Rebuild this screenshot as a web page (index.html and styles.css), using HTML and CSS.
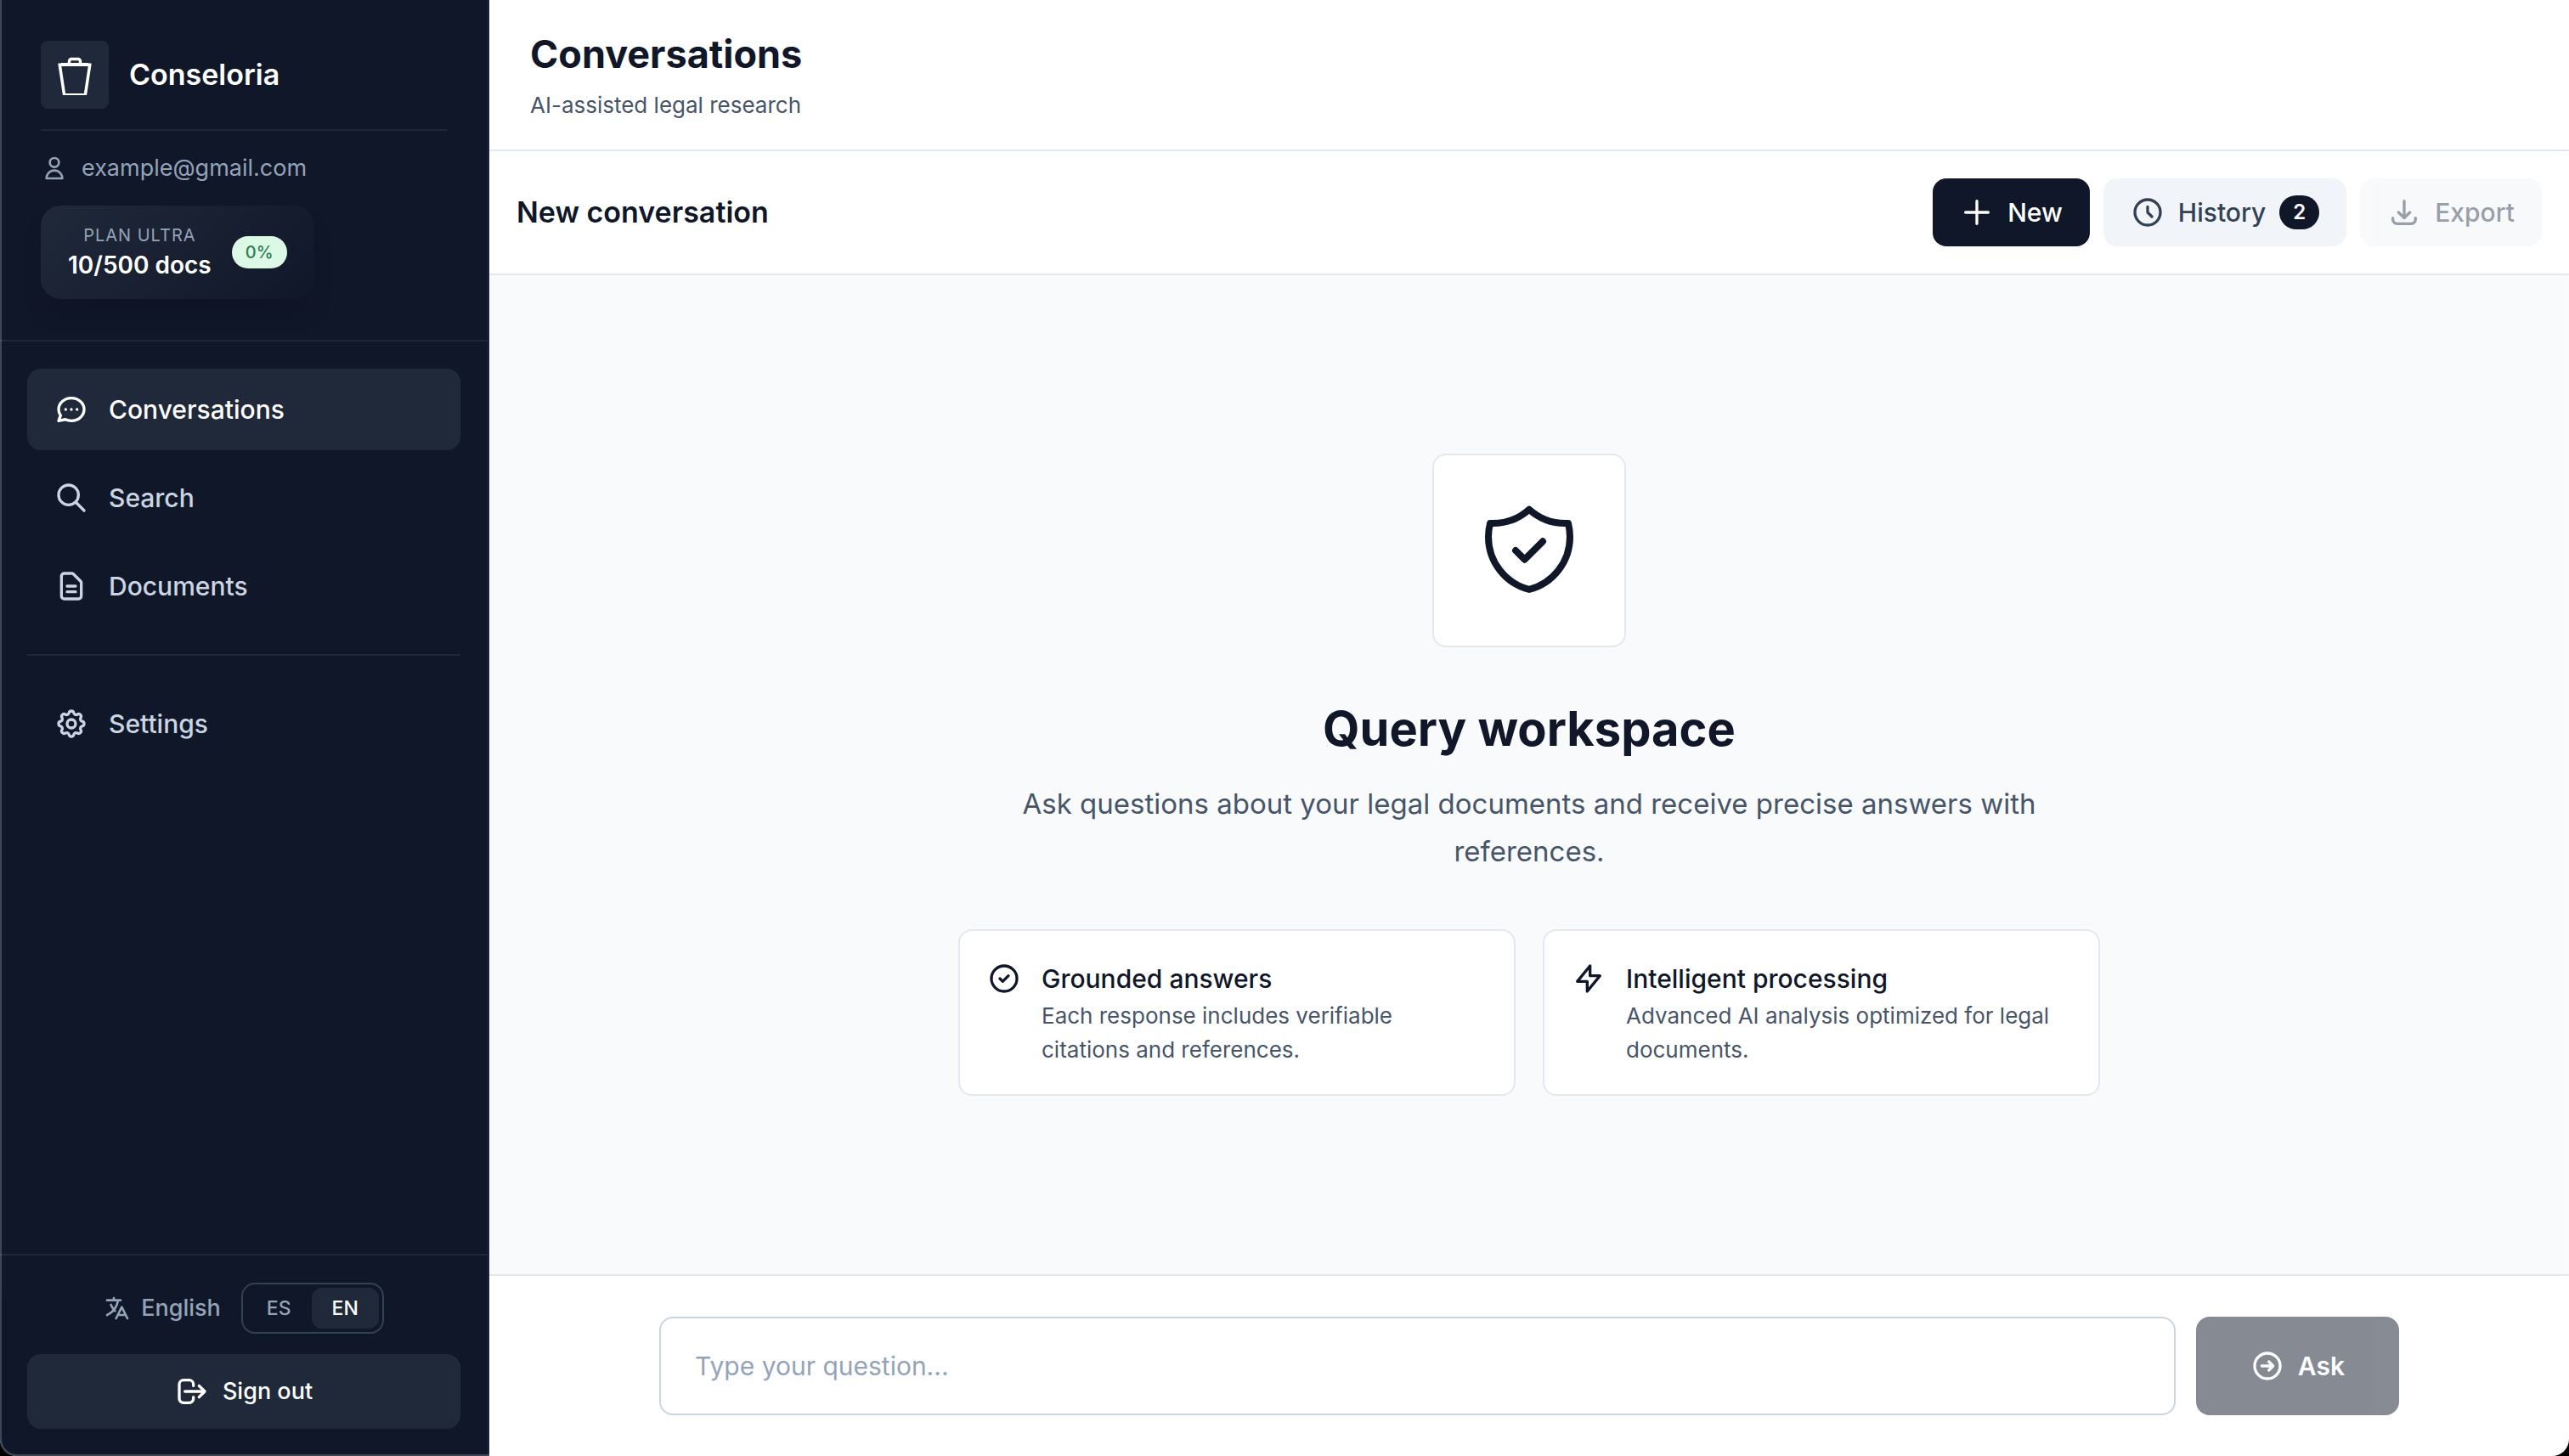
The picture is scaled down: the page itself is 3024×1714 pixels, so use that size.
FILE: index.html
```
<!DOCTYPE html>
<html lang="en">

<head>
    <meta charset="utf-8">
    <title>Conseloria</title>
    <link rel="stylesheet" href="styles.css">
</head>

<body>
    <div class="app">
        <aside class="sidebar">
            <div class="sidebar-header">
                <div class="brand">
                    <div class="brand-logo">
                        <svg width="48" height="48" viewBox="0 0 48 48" fill="none" stroke="currentColor">
                            <path d="M6 10.500L11.500 47M42 10.500L36.500 47" stroke-width="3.500" />
                            <path d="M8 12h32" stroke-width="4" />
                            <path d="M10 47h28" stroke-width="2" />
                            <path d="M17.500 11V8a2.500 2.500 0 0 1 2.500-2.500h8a2.500 2.500 0 0 1 2.500 2.500v3" stroke-width="3.500" />
                        </svg>
                    </div>
                    <span class="brand-name">Conseloria</span>
                </div>
                <div class="user">
                    <svg class="icon icon-sm" viewBox="0 0 24 24"><path d="M16 7a4 4 0 11-8 0 4 4 0 018 0zM12 14a7 7 0 00-7 7h14a7 7 0 00-7-7z" /></svg>
                    <span>example@gmail.com</span>
                </div>
                <div class="plan">
                    <div class="plan-info">
                        <span class="plan-name">Plan Ultra</span>
                        <span class="plan-docs">10/500 docs</span>
                    </div>
                    <span class="plan-badge">0%</span>
                </div>
            </div>

            <nav class="nav">
                <a class="nav-item active" href="#">
                    <svg class="icon" viewBox="0 0 24 24"><path d="M8 12h.01M12 12h.01M16 12h.01M21 12c0 4.418-4.030 8-9 8a9.863 9.863 0 01-4.255-.949L3 20l1.395-3.720C3.512 15.042 3 13.574 3 12c0-4.418 4.030-8 9-8s9 3.582 9 8z" /></svg>
                    Conversations
                </a>
                <a class="nav-item" href="#">
                    <svg class="icon" viewBox="0 0 24 24"><path d="M21 21l-6-6m2-5a7 7 0 11-14 0 7 7 0 0114 0z" /></svg>
                    Search
                </a>
                <a class="nav-item" href="#">
                    <svg class="icon" viewBox="0 0 24 24"><path d="M9 12h6m-6 4h6m2 5H7a2 2 0 01-2-2V5a2 2 0 012-2h5.586a1 1 0 01.707.293l5.414 5.414a1 1 0 01.293.707V19a2 2 0 01-2 2z" /></svg>
                    Documents
                </a>
                <hr class="nav-divider">
                <a class="nav-item" href="#">
                    <svg class="icon" viewBox="0 0 24 24">
                        <path d="M10.325 4.317c.426-1.756 2.924-1.756 3.350 0a1.724 1.724 0 002.573 1.066c1.543-.940 3.310.826 2.370 2.370a1.724 1.724 0 001.065 2.572c1.756.426 1.756 2.924 0 3.350a1.724 1.724 0 00-1.066 2.573c.940 1.543-.826 3.310-2.370 2.370a1.724 1.724 0 00-2.572 1.065c-.426 1.756-2.924 1.756-3.350 0a1.724 1.724 0 00-2.573-1.066c-1.543.940-3.310-.826-2.370-2.370a1.724 1.724 0 00-1.065-2.572c-1.756-.426-1.756-2.924 0-3.350a1.724 1.724 0 001.066-2.573c-.940-1.543.826-3.310 2.370-2.370.996.608 2.296.070 2.572-1.065z" />
                        <path d="M15 12a3 3 0 11-6 0 3 3 0 016 0z" />
                    </svg>
                    Settings
                </a>
            </nav>

            <div class="sidebar-footer">
                <div class="language">
                    <span class="language-label">
                        <svg class="icon icon-sm" viewBox="0 0 24 24"><path d="M3 5h12M9 3v2m1.048 9.500A18.022 18.022 0 016.412 9m6.088 9h7M11 21l5-10 5 10M12.751 5C11.783 10.770 8.070 15.610 3 18.129" /></svg>
                        English
                    </span>
                    <div class="language-switch">
                        <button type="button">ES</button>
                        <button type="button" class="selected">EN</button>
                    </div>
                </div>
                <button type="button" class="sign-out">
                    <svg class="icon" viewBox="0 0 24 24"><path d="M17 16l4-4m0 0l-4-4m4 4H7m6 4v1a3 3 0 01-3 3H6a3 3 0 01-3-3V7a3 3 0 013-3h4a3 3 0 013 3v1" /></svg>
                    Sign out
                </button>
            </div>
        </aside>

        <main class="main">
            <header class="page-header">
                <h1>Conversations</h1>
                <p>AI-assisted legal research</p>
            </header>

            <div class="toolbar">
                <h2>New conversation</h2>
                <div class="toolbar-actions">
                    <button type="button" class="btn btn-primary">
                        <svg class="icon" viewBox="0 0 24 24"><path d="M12 4v16m8-8H4" /></svg>
                        New
                    </button>
                    <button type="button" class="btn">
                        <svg class="icon" viewBox="0 0 24 24"><path d="M12 8v4l3 3m6-3a9 9 0 11-18 0 9 9 0 0118 0z" /></svg>
                        History
                        <span class="count">2</span>
                    </button>
                    <button type="button" class="btn" disabled>
                        <svg class="icon" viewBox="0 0 24 24"><path d="M4 16v1a3 3 0 003 3h10a3 3 0 003-3v-1m-4-4l-4 4m0 0l-4-4m4 4V4" /></svg>
                        Export
                    </button>
                </div>
            </div>

            <section class="workspace">
                <div class="workspace-icon">
                    <svg class="icon icon-xl" viewBox="0 0 24 24"><path d="M9 12l2 2 4-4m5.618-4.016A11.955 11.955 0 0112 2.944a11.955 11.955 0 01-8.618 3.040A12.020 12.020 0 003 9c0 5.591 3.824 10.290 9 11.622 5.176-1.332 9-6.030 9-11.622 0-1.042-.133-2.052-.382-3.016z" /></svg>
                </div>
                <h2>Query workspace</h2>
                <p class="workspace-text">Ask questions about your legal documents and receive precise answers with references.</p>
                <div class="features">
                    <div class="feature">
                        <svg class="icon" viewBox="0 0 24 24"><path d="M9 12l2 2 4-4m6 2a9 9 0 11-18 0 9 9 0 0118 0z" /></svg>
                        <div>
                            <h3>Grounded answers</h3>
                            <p>Each response includes verifiable citations and references.</p>
                        </div>
                    </div>
                    <div class="feature">
                        <svg class="icon" viewBox="0 0 24 24"><path d="M13 10V3L4 14h7v7l9-11h-7z" /></svg>
                        <div>
                            <h3>Intelligent processing</h3>
                            <p>Advanced AI analysis optimized for legal documents.</p>
                        </div>
                    </div>
                </div>
            </section>

            <div class="composer">
                <form class="composer-form">
                    <input type="text" aria-label="Question" placeholder="Type your question...">
                    <button type="submit" class="ask" disabled>
                        <svg class="icon" viewBox="0 0 24 24"><path d="M13 9l3 3m0 0l-3 3m3-3H8m13 0a9 9 0 11-18 0 9 9 0 0118 0z" /></svg>
                        Ask
                    </button>
                </form>
            </div>
        </main>
    </div>
</body>

</html>
```
FILE: styles.css
```
* {
    box-sizing: border-box;
}

body {
    margin: 0;
    background: #000;
    font-family: Inter, "Liberation Sans", sans-serif;
    font-size: 30px;
    line-height: 48px;
    color: #101729;
}

h1,
h2,
h3,
p {
    margin: 0;
}

button,
input {
    font-family: inherit;
    border: none;
}

a {
    text-decoration: none;
}

.app {
    display: flex;
    min-height: 100vh;
    position: relative;
    overflow: hidden;
    border-radius: 0 0 20px 20px;
    background: #fff;
}

/* thin light edge of the window */
.app:after {
    content: "";
    position: absolute;
    inset: 0;
    border: 2px solid rgba(255, 255, 255, 0.2);
    border-top: none;
    border-radius: 0 0 20px 20px;
    pointer-events: none;
}

.icon {
    width: 40px;
    height: 40px;
    flex-shrink: 0;
    fill: none;
    stroke: currentColor;
    stroke-width: 2;
    stroke-linecap: round;
    stroke-linejoin: round;
}

.icon-sm {
    width: 32px;
    height: 32px;
}

.icon-xl {
    width: 128px;
    height: 128px;
    stroke-width: 1.5;
}

/* sidebar */
.sidebar {
    display: flex;
    flex-direction: column;
    flex-shrink: 0;
    width: 576px;
    background: #101729;
    border-right: 2px solid #17233a;
    color: #cbd5e1;
}

.sidebar-header {
    padding: 48px;
    border-bottom: 2px solid #20293a;
}

.brand {
    display: flex;
    align-items: center;
    gap: 24px;
    padding-bottom: 24px;
    border-bottom: 2px solid #20293a;
}

.brand-logo {
    display: flex;
    align-items: center;
    justify-content: center;
    width: 80px;
    height: 80px;
    border-radius: 8px;
    background: #20293a;
    color: #fff;
}

.brand-name {
    font-size: 34px;
    font-weight: 600;
    color: #fff;
}

.user {
    display: flex;
    align-items: center;
    gap: 16px;
    margin: 24px 0;
    font-size: 27px;
    line-height: 40px;
    color: #94a3b8;
}

.plan {
    display: inline-flex;
    align-items: center;
    gap: 24px;
    padding: 20px 32px;
    border-radius: 24px;
    background: linear-gradient(135deg, #20293a, #101729);
    box-shadow: 0 20px 30px -12px rgba(15, 15, 30, 0.4);
    vertical-align: top;
}

.plan-info {
    display: flex;
    flex-direction: column;
    align-items: center;
}

.plan-name {
    font-size: 20px;
    line-height: 30px;
    letter-spacing: 1px;
    text-transform: uppercase;
    color: #94a3b8;
}

.plan-docs {
    font-size: 28px;
    line-height: 40px;
    font-weight: 600;
    color: #fff;
}

.plan-badge {
    padding: 4px 16px;
    border-radius: 20px;
    background: #dcf9e5;
    color: #2f7d56;
    font-size: 20px;
    line-height: 30px;
    font-weight: 500;
}

.nav {
    display: flex;
    flex-direction: column;
    gap: 8px;
    padding: 32px;
}

.nav-item {
    display: flex;
    align-items: center;
    gap: 24px;
    padding: 24px 32px;
    border-radius: 16px;
    font-weight: 500;
    color: #cbd5e1;
}

.nav-item.active {
    background: #20293a;
    color: #fff;
}

.nav-divider {
    width: 100%;
    margin: 24px 0;
    border: none;
    border-top: 2px solid #20293a;
}

.sidebar-footer {
    display: flex;
    flex-direction: column;
    gap: 24px;
    margin-top: auto;
    padding: 32px;
    border-top: 2px solid #20293a;
}

.language {
    display: flex;
    align-items: center;
    justify-content: center;
    gap: 24px;
}

.language-label {
    display: flex;
    align-items: center;
    gap: 12px;
    font-size: 27px;
    line-height: 40px;
    font-weight: 500;
    color: #94a3b8;
}

.language-switch {
    display: flex;
    padding: 4px;
    border: 2px solid #334155;
    border-radius: 16px;
}

.language-switch button {
    padding: 8px 24px;
    border-radius: 12px;
    background: none;
    color: #94a3b8;
    font-size: 23px;
    line-height: 32px;
    font-weight: 500;
}

.language-switch .selected {
    background: #20293a;
    color: #fff;
}

.sign-out {
    display: flex;
    align-items: center;
    justify-content: center;
    gap: 16px;
    padding: 24px 32px;
    border-radius: 16px;
    background: #20293a;
    color: #fff;
    font-size: 27px;
    line-height: 40px;
    font-weight: 500;
}

/* main column */
.main {
    display: flex;
    flex-direction: column;
    flex: 1;
    min-width: 0;
}

.page-header {
    padding: 32px 48px;
    border-bottom: 2px solid #e2e8f0;
}

.page-header h1 {
    margin-bottom: 8px;
    font-size: 45px;
    line-height: 64px;
    font-weight: 700;
}

.page-header p {
    font-size: 26px;
    line-height: 40px;
    color: #475569;
}

.toolbar {
    display: flex;
    align-items: center;
    justify-content: space-between;
    padding: 32px;
    border-bottom: 2px solid #e2e8f0;
}

.toolbar h2 {
    font-size: 34px;
    font-weight: 600;
}

.toolbar-actions {
    display: flex;
    gap: 16px;
}

.btn {
    display: flex;
    align-items: center;
    gap: 16px;
    padding: 16px 32px;
    border-radius: 16px;
    background: #f1f5f9;
    color: #334155;
    font-size: 30px;
    line-height: 48px;
    font-weight: 500;
}

.btn-primary {
    background: #101729;
    color: #fff;
}

.btn:disabled {
    opacity: 0.5;
}

.count {
    padding: 4px 16px;
    border-radius: 20px;
    background: #101729;
    color: #fff;
    font-size: 24px;
    line-height: 32px;
    font-weight: 600;
}

.workspace {
    display: flex;
    flex-direction: column;
    align-items: center;
    justify-content: center;
    flex: 1;
    padding: 48px;
    background: #f9fafc;
    text-align: center;
}

.workspace-icon {
    display: flex;
    padding: 48px;
    margin-bottom: 60px;
    border: 2px solid #e2e8f0;
    border-radius: 16px;
    background: #fff;
}

.workspace h2 {
    margin-bottom: 24px;
    font-size: 56px;
    line-height: 72px;
    font-weight: 700;
}

.workspace-text {
    max-width: 1344px;
    margin-bottom: 64px;
    font-size: 33px;
    line-height: 56px;
    color: #475569;
}

.features {
    display: grid;
    grid-template-columns: 1fr 1fr;
    gap: 32px;
    width: 100%;
    max-width: 1344px;
    text-align: left;
}

.feature {
    display: flex;
    gap: 24px;
    padding: 32px;
    border: 2px solid #e2e8f0;
    border-radius: 16px;
    background: #fff;
}

.feature .icon {
    margin-top: 4px;
}

.feature h3 {
    font-size: 30px;
    font-weight: 500;
}

.feature p {
    font-size: 26px;
    line-height: 40px;
    color: #475569;
}

.composer {
    padding: 48px;
    border-top: 2px solid #e2e8f0;
}

.composer-form {
    display: flex;
    gap: 24px;
    max-width: 2048px;
    margin: 0 auto;
}

.composer-form input {
    flex: 1;
    min-width: 0;
    padding: 32px 40px;
    border: 2px solid #cbd5e1;
    border-radius: 16px;
    font-size: 30px;
    line-height: 48px;
    color: #101729;
}

.composer-form input::placeholder {
    color: #94a3b8;
}

.ask {
    display: flex;
    align-items: center;
    gap: 16px;
    padding: 34px 64px;
    border-radius: 16px;
    background: #101729;
    color: #fff;
    font-size: 30px;
    line-height: 48px;
    font-weight: 600;
}

.ask:disabled {
    opacity: 0.5;
}
```
